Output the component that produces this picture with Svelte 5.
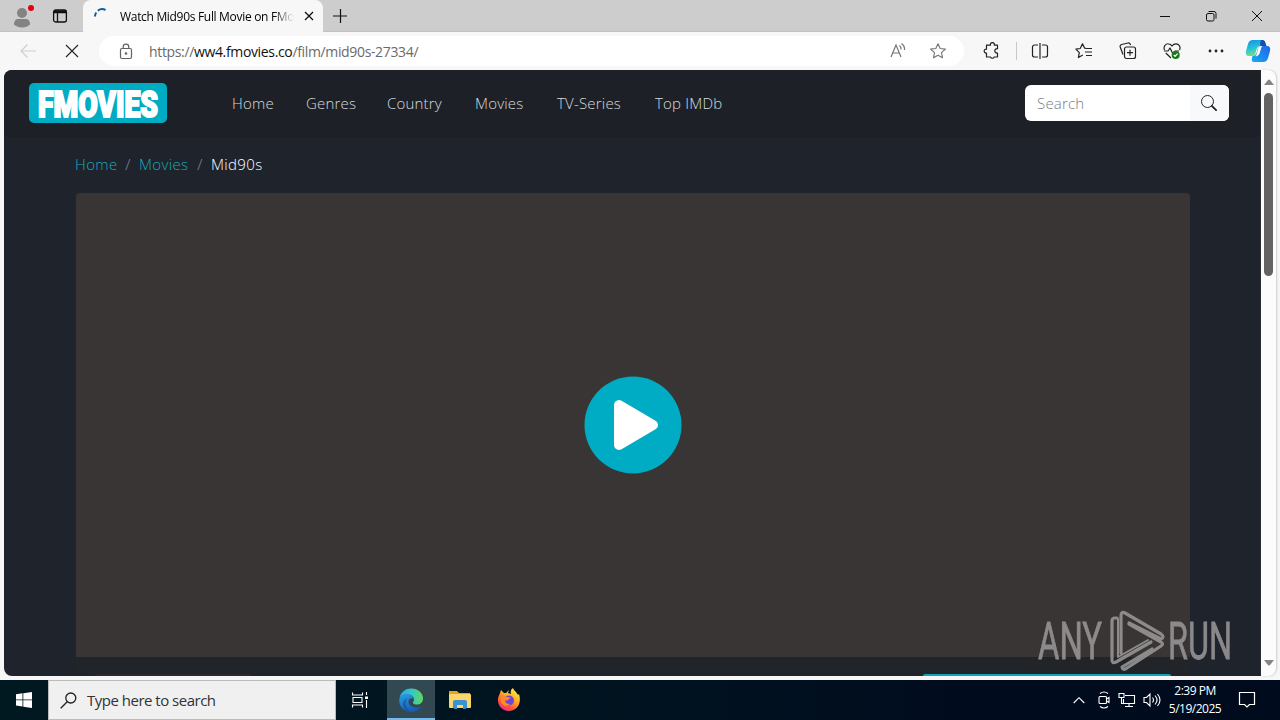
<!--
  Desktop — a browser window showing a film page, with the system taskbar below.
-->
<script lang="ts">
	const links = [
		{ label: 'Home', width: 42 },
		{ label: 'Genres', width: 49 },
		{ label: 'Country', width: 56 },
		{ label: 'Movies', width: 50 },
		{ label: 'TV-Series', width: 66 },
		{ label: 'Top IMDb', width: 67 }
	];

	let query = $state('');
</script>

<div class="desktop">
	<div class="tabs">
		<svg class="profile" width="24" height="28" viewBox="0 0 24 28">
			<circle cx="12" cy="11" r="5" fill="#858381" />
			<path d="M4 22.500c0-4 2-5.500 4-5.500h8c2 0 4 1.500 4 5.500-4 4-12 4-16 0z" fill="#858381" />
			<circle cx="21" cy="6" r="3" fill="#e3000f" />
		</svg>
		<svg class="tab-actions" width="16" height="16" viewBox="0 0 16 16" fill="none" stroke="#111" stroke-width="1.300">
			<rect x="1.600" y="2" width="12.800" height="12" rx="2" />
			<path d="M1.600 4.500h12.800M5.500 5v9" />
			<path d="M2 3.300h12" stroke-width="2" />
		</svg>
		<div class="tab">
			<svg class="spinner" width="16" height="16" viewBox="0 0 16 16" fill="none" stroke="#155a9b" stroke-width="2">
				<path d="M1 8.500a6.500 6.500 0 0 1 1.300-4M3.800 2.800A7 7 0 0 1 11.500 2" />
			</svg>
			<span class="tab-title">Watch Mid90s Full Movie on FMo</span>
			<svg width="10" height="10" viewBox="0 0 10 10" stroke="#111" stroke-width="1.300"><path d="m1 1 8 8M9 1 1 9" /></svg>
		</div>
		<svg class="new-tab" width="14" height="14" viewBox="0 0 14 14" stroke="#111" stroke-width="1.200"><path d="M0 7h14M7.500 0v14" /></svg>
		<div class="window-controls">
			<svg width="12" height="12" viewBox="0 0 12 12" stroke="#111" fill="none"><path d="M1 6.500h10" /></svg>
			<svg width="12" height="12" viewBox="0 0 12 12" stroke="#111" fill="none">
				<rect x="1.500" y="3.500" width="7.500" height="7.500" rx="1.500" />
				<path d="M3.500 1.500h5.500a2 2 0 0 1 2 2v5" />
			</svg>
			<svg width="12" height="12" viewBox="0 0 12 12" stroke="#111" fill="none"><path d="m1 1 10 10M11 1 1 11" /></svg>
		</div>
	</div>

	<div class="toolbar">
		<svg class="back" width="18" height="16" viewBox="0 0 18 16" fill="none" stroke="#cfcfcf" stroke-width="1.200"><path d="M17 8H2M8.500 1.500 2 8l6.500 6.500" /></svg>
		<svg class="stop" width="14" height="14" viewBox="0 0 14 14" stroke="#222" stroke-width="1.100"><path d="m1 1 12 12M13 1 1 13" /></svg>
		<div class="address">
			<svg width="14" height="17" viewBox="0 0 14 17" fill="none" stroke="#626262" stroke-width="1.200">
				<rect x="1.500" y="5.500" width="11" height="10" rx="1.500" />
				<path d="M4.200 5.500V4a2.800 2.800 0 0 1 5.600 0v1.500" />
				<circle cx="7" cy="10.500" r=".7" fill="#626262" />
			</svg>
			<span class="url">https://<b>ww4.fmovies.co</b>/film/mid90s-27334/</span>
			<svg class="read" width="18" height="18" viewBox="0 0 18 18" fill="none" stroke="#747474" stroke-width="1.200">
				<path d="M2 15 7 3l5 12M3.700 11h6.600M10.500 3.500q1.700 1.500 1.500 4M12.500 1.500q3.500 2.500 3 6.500" />
			</svg>
			<svg class="star" width="18" height="18" viewBox="0 0 18 18" fill="none" stroke="#747474" stroke-width="1.100" stroke-linejoin="round">
				<path d="m9 1.800 2.200 4.700 5.200.6-3.900 3.500 1 5.100L9 13.200l-4.500 2.500 1-5.100-3.900-3.500 5.200-.6z" />
			</svg>
		</div>
		<div class="tools">
			<svg width="18" height="18" viewBox="0 0 18 18">
				<path d="M3.500 3.200h4a2 2 0 1 1 3.800 0h3.200v3.500c-3.600-.5-3.600 4.800 0 4.300v4h-3.300a2 2 0 0 1-3.700 0H3.500v-4C.4 11.500.4 6.700 3.500 7.200z" />
			</svg>
			<svg width="18" height="18" viewBox="0 0 18 18">
				<path d="M7 3H3.500a2 2 0 0 0-2 2v8a2 2 0 0 0 2 2H7M11 3h3.500a2 2 0 0 1 2 2v8a2 2 0 0 1-2 2H11M9 1v16" />
			</svg>
			<svg width="18" height="18" viewBox="0 0 18 18">
				<path d="m11.500 6.500-1.800-.3-2.200-4.400-2.300 4.700-4.300.7 3.400 3.400-.9 5 4.400-2.500M11.500 6.500H17M10 10h7M11 13.500h6" />
			</svg>
			<svg width="18" height="18" viewBox="0 0 18 18">
				<path d="M4 12.500 1.200 5q-.5-2 1.500-2.500L9 1q2-.4 2.600 2" />
				<rect x="5.500" y="5" width="11" height="11.500" rx="2" />
				<path d="M11 7.700v6M8 10.700h6" />
			</svg>
			<svg width="18" height="18" viewBox="0 0 18 18">
				<path d="M1.500 8C0 4 3 1.500 5.500 1.800 7.700 2 9 4 9 4s1.500-2.200 4-2.200c3 0 5 3 3.500 6.200M2.800 11 8 16M1 9h4l2-3 3 6 2-3h4" />
				<circle cx="12.700" cy="13" r="4" fill="#16791b" stroke="none" />
				<path d="m10.800 13 1.300 1.300 2.500-2.700" stroke="#fff" />
			</svg>
			<svg width="18" height="18" viewBox="0 0 18 18" class="dots">
				<circle cx="3" cy="9" r="1.400" /><circle cx="9" cy="9" r="1.400" /><circle cx="15" cy="9" r="1.400" />
			</svg>
		</div>
		<svg class="copilot" width="26" height="24" viewBox="0 0 26 24">
			<defs>
				<linearGradient id="co-a" x1="0" y1="0" x2=".3" y2="1"><stop stop-color="#168bea" /><stop offset=".6" stop-color="#28c6d4" /><stop offset="1" stop-color="#7adf78" /></linearGradient>
				<linearGradient id="co-b" x1="1" y1="0" x2="0" y2="1"><stop stop-color="#2361e9" /><stop offset="1" stop-color="#13acf7" /></linearGradient>
			</defs>
			<path d="M8 1h9q3 0 2.300 3l-1 3h-3q-3 0-4 4l-1 4q-1 2-3 2H4q-4 0-3-5l2-7q1-4 5-4z" fill="url(#co-a)" />
			<path d="M18 7h4q4 0 3 5l-2 7q-1 4-5 4H9q-3 0-2-4l.5-2q3 0 4-3l1.500-5 3-3q0 0-1 3l-1.500 5q-.7 3-4 4 4-1 5-4l2-6q.5-1 1.500-1z" fill="url(#co-b)" />
			<path d="M15 1h2q3 0 3.500 3l1 3h-5.500q-2-1 0-6z" fill="#154faf" />
			<path d="M13.500 8.500q1-1.500 3-1.500l-2 7q-.8 3-4 3 1-1 1.500-3z" fill="#fff" />
		</svg>
	</div>

	<div class="window-body">
		<div class="page">
			<header class="site-header">
				<a class="logo" href="#home" aria-label="FMOVIES">
					<svg width="138" height="40" viewBox="0 0 138 40">
						<text x="9" y="33.500" textLength="120" lengthAdjust="spacingAndGlyphs">FMOVIES</text>
					</svg>
				</a>
				<nav>
					{#each links as link}
						<a href="#nav" style="width: {link.width}px">{link.label}</a>
					{/each}
				</nav>
				<form class="search">
					<input placeholder="Search" bind:value={query} />
					<button type="button" aria-label="Search">
						<svg width="16" height="16" viewBox="0 0 16 16" fill="none" stroke="#212529">
							<circle cx="6.500" cy="6.500" r="6" />
							<path d="m10.800 10.800 4.300 4.300" stroke-width="1.900" stroke-linecap="round" />
						</svg>
					</button>
				</form>
			</header>

			<div class="breadcrumb">
				<a href="#home" class="crumb-home">Home</a>
				<i>/</i>
				<a href="#movies" class="crumb-movies">Movies</a>
				<i>/</i>
				<span>Mid90s</span>
			</div>

			<div class="player">
				<svg width="98" height="98" viewBox="0 0 98 98">
					<circle cx="49" cy="49" r="48.500" fill="#00acc4" />
					<path d="M35 29v40l34-20z" fill="#fff" stroke="#fff" stroke-width="10" stroke-linejoin="round" />
				</svg>
			</div>
			<div class="player-actions">
				<span class="report"></span>
				<span class="watch"></span>
			</div>
		</div>
		<div class="scrollbar">
			<svg width="10" height="6" viewBox="0 0 10 6"><path d="M0 6 4 1q1-1 2 0l4 5z" fill="#858585" /></svg>
			<div class="thumb"></div>
			<svg class="down" width="10" height="6" viewBox="0 0 10 6"><path d="M0 0h10L6 5Q5 6 4 5z" fill="#858585" /></svg>
		</div>
	</div>

	<div class="taskbar">
		<div class="start">
			<svg width="16" height="16" viewBox="0 0 16 16" fill="#fff"><path d="M0 2.200 6.500 1.300v6.200H0zM7.300 1.200 16 0v7.500H7.300zM0 8.300h6.500v6.200L0 13.600zM7.300 8.300H16V16l-8.700-1.300z" /></svg>
		</div>
		<div class="task-search">
			<svg width="17" height="17" viewBox="0 0 17 17" fill="none" stroke="#222" stroke-width="1.300"><circle cx="10.800" cy="6" r="5" /><path d="M7.200 9.700.7 16.200" /></svg>
			<span>Type here to search</span>
		</div>
		<div class="task task-view">
			<svg width="18" height="18" viewBox="0 0 18 18" fill="none" stroke="#fff" stroke-width="1.100">
				<path d="M1.500 1.500v2.500h10V1.500M1.500 16.500V14h10v2.500M2 6.500h9v5H2zM15.500 1v3M15.500 9v8" />
				<path d="M14 5.500h3v2.500h-3z" fill="#fff" stroke="none" />
			</svg>
		</div>
		<div class="task active">
			<svg width="24" height="24" viewBox="0 0 24 24">
				<defs>
					<linearGradient id="edge-top"><stop stop-color="#2aa8df" /><stop offset=".5" stop-color="#33c6cb" /><stop offset="1" stop-color="#62d957" /></linearGradient>
					<linearGradient id="edge-low" x1="0" y1="0" x2=".5" y2="1"><stop stop-color="#2a9fe5" /><stop offset="1" stop-color="#155db2" /></linearGradient>
				</defs>
				<path d="M.5 10C2 3.500 7 .3 12.500.5 19 .5 24 5 24 10.500c0 4-3 6-6 6-3.500 0-5-1.500-3.500-3C16 11 14.500 8 11 7 7 5.500 2.500 7 .5 10z" fill="url(#edge-top)" />
				<path d="M.3 12C.5 8 4 5.700 8 6c4 0 7 2.500 7 5-1.500-1.500-5-1-5.500 2-.5 4 4 7 8 6.500 2 0 3.500-.7 4.500-1-2.500 3.700-6 5.500-10 5.500C5.500 24-.2 18.500.3 12z" fill="url(#edge-low)" />
				<path d="M8.500 10C4 15 7.500 22.500 13 23.900 8 24.500 4 20 4 16c0-3 2-5 4.500-6z" fill="#1749a0" opacity=".65" />
			</svg>
		</div>
		<div class="task">
			<svg width="22" height="20" viewBox="0 0 22 20">
				<path d="M0 1h8l2 2h11v4H0z" fill="#e8a21c" />
				<path d="M0 4h21q1 0 1 1v12q0 1-1 1H1q-1 0-1-1z" fill="#fbd66a" />
				<path d="M4 18v-6q0-2 2-2h10q2 0 2 2v6l-2 1h-2v-4H8v4H6z" fill="#3a93d1" />
			</svg>
		</div>
		<div class="task">
			<svg width="24" height="24" viewBox="0 0 24 24">
				<defs>
					<linearGradient id="fox" x1=".8" y1="0" x2=".2" y2="1"><stop stop-color="#fff34c" /><stop offset=".4" stop-color="#ffac28" /><stop offset=".7" stop-color="#ff5b36" /><stop offset="1" stop-color="#e9248b" /></linearGradient>
				</defs>
				<path d="M3 5 4 2l3 3h2l3-3-1 3 3 1c-1-3 .5-5 2-6 1 3 3 3 5 7l1-1c3 9-2 17-10 17C4 23 0 16 1 10l2-5z" fill="url(#fox)" />
				<circle cx="12" cy="12.500" r="5" fill="#7045d1" />
				<path d="M4 9q3-2 6 0l4 .5-3 2.500q-2 1-3 0 0 4 5 4-4 4-8 0-2-3-1-7z" fill="#ff8b24" />
			</svg>
		</div>
		<div class="tray">
			<svg class="chevron" width="12" height="8" viewBox="0 0 12 8"><path d="m.7 7 5.300-5.300L11.300 7" /></svg>
			<svg width="14" height="18" viewBox="0 0 14 18"><rect x="2" y="5.500" width="7.500" height="7" rx="1" /><path d="m9.500 8 2.500-1.500v5L9.500 10M3 2.500Q7-.5 11 2.500M3 15.500q4 3 8 0" /></svg>
			<svg width="18" height="16" viewBox="0 0 18 16"><path d="M7 3.500h9.500v8H5.500V7M11 11.500v3M7 14.500h8M1 1.500h5v4H1zM3.500 5.500v6h2" /></svg>
			<svg width="18" height="16" viewBox="0 0 18 16"><path d="M1 5.500h2.500L7 2v12L3.500 10.500H1zM9.500 5.500q2 2.500 0 5M12 3.500q4 4.500 0 9M14.500 2q5 6 0 12" /></svg>
		</div>
		<div class="clock">
			<span class="time">2:39 PM</span>
			<span class="date">5/19/2025</span>
		</div>
		<svg class="notify" width="18" height="18" viewBox="0 0 18 18" fill="none" stroke="#fff" stroke-width="1.200"><path d="M1.500 1.500h15v12h-5L9 16l-2.500-2.500h-5z" /></svg>
	</div>

	<svg class="watermark" width="200" height="62" viewBox="0 0 200 62">
		<g class="letters">
			<text transform="translate(0 49) scale(1 1.280)" textLength="64" lengthAdjust="spacingAndGlyphs">ANY</text>
			<text transform="translate(130 49) scale(1 1.280)" textLength="64" lengthAdjust="spacingAndGlyphs">RUN</text>
		</g>
		<g fill="none" stroke="#969495" stroke-width="3.200" stroke-linejoin="round" stroke-linecap="round">
			<path d="M79 8h-2q-3 0-3 3v39q0 4 4 2l35-20" />
			<path d="M83 43V6q0-5 4-3l36 21q4 3 0 5L91 13" />
			<path d="m91 14 32 18q3 2 0 4L89 58q-4 3-5-1l30-18" />
			<path d="M80 9v38l30-17" stroke-width="2" />
		</g>
	</svg>
</div>

<style>
	:global(body) {
		margin: 0;
		overflow: hidden;
	}
	.desktop {
		position: relative;
		display: grid;
		grid-template-rows: 32px 38px 610px 40px;
		width: 1280px;
		height: 720px;
		background: #f7f7f7;
		font-family: 'Open Sans', 'Noto Sans', sans-serif;
		overflow: hidden;
	}
	svg {
		display: block;
		flex: none;
	}
	a {
		color: inherit;
		text-decoration: none;
	}

	.tabs {
		display: flex;
		align-items: center;
		box-sizing: border-box;
		background: #cdcdcd;
		border-bottom: 1px solid #c2c2c2;
	}
	.profile {
		margin-left: 10px;
	}
	.tab-actions {
		margin: 0 15px 0 18px;
	}
	.tab {
		display: flex;
		align-items: center;
		align-self: stretch;
		box-sizing: border-box;
		width: 240px;
		margin-bottom: -1px;
		padding: 0 11px;
		background: #f7f7f7;
		border-radius: 8px 8px 0 0;
	}
	.tab-title {
		width: 174px;
		margin: 0 10px;
		font-size: 12px;
		letter-spacing: -0.31px;
		white-space: nowrap;
		mask-image: linear-gradient(90deg, #000 88%, transparent);
	}
	.new-tab {
		margin-left: 10px;
	}
	.window-controls {
		display: flex;
		gap: 34px;
		margin-left: auto;
		margin-right: 17px;
	}

	.toolbar {
		display: flex;
		align-items: center;
	}
	.back {
		margin-left: 19px;
	}
	.stop {
		margin: 0 21px 0 28px;
	}
	.address {
		display: flex;
		align-items: center;
		box-sizing: border-box;
		width: 865px;
		height: 30px;
		margin-left: -1px;
		padding: 0 17px 0 20px;
		background: #fff;
		border-radius: 15px;
	}
	.url {
		margin-left: 16px;
		color: #6a6a6a;
		font-size: 14px;
		letter-spacing: -0.35px;
	}
	.url b {
		color: #111;
		font-weight: 400;
	}
	.read {
		margin-left: auto;
	}
	.star {
		margin-left: 22px;
	}
	.tools {
		display: grid;
		grid-template-columns: 48px repeat(4, 44px) 18px;
		margin-left: 19px;
		fill: none;
		stroke: #222;
		stroke-width: 1.200;
		stroke-linejoin: round;
	}
	.tools svg:first-child {
		box-sizing: border-box;
		width: 34px;
		border-right: 1px solid #c8c8c8;
		padding-right: 15px;
	}
	.tools .dots {
		fill: #222;
		stroke: none;
	}
	.copilot {
		margin-left: 20px;
	}

	.window-body {
		display: flex;
		box-sizing: border-box;
		padding: 0 4px 4px;
	}
	.page {
		display: flex;
		flex-direction: column;
		width: 1257px;
		height: 606px;
		overflow: hidden;
		background: #1f232b;
		border-radius: 8px 0 0 8px;
		font-size: 16px;
		font-weight: 300;
	}
	.site-header {
		display: flex;
		flex: none;
		align-items: center;
		box-sizing: border-box;
		height: 67px;
		padding: 0 32px 1px 25px;
		background: #1d2127;
	}
	.logo {
		width: 138px;
		height: 40px;
		background: #00acc4;
		border-radius: 5px;
	}
	.logo svg {
		overflow: visible;
	}
	.logo text {
		fill: #fff;
		stroke: #fff;
		stroke-width: 2;
		font: 900 36px Roboto, sans-serif;
	}
	nav {
		display: flex;
		gap: 32px;
		margin-left: 65px;
		color: #d8dade;
		font-size: 15px;
		letter-spacing: 0.2px;
		white-space: nowrap;
	}
	.search {
		display: flex;
		width: 204px;
		height: 36px;
		margin-left: auto;
		overflow: hidden;
		background: #fff;
		border-radius: 6px;
	}
	.search input {
		flex: 1;
		min-width: 0;
		padding: 0 12px;
		border: 0;
		background: none;
		font: 300 15px 'Open Sans', sans-serif;
		letter-spacing: 0.2px;
	}
	.search input::placeholder {
		color: #777b82;
	}
	.search button {
		display: grid;
		place-items: center;
		width: 39px;
		padding: 0 2px 0 0;
		border: 0;
		background: #f8f9fa;
	}

	.breadcrumb {
		display: flex;
		align-items: center;
		height: 24px;
		margin: 15px 0 17px 71px;
		color: #fff;
		font-size: 15px;
		letter-spacing: 0.35px;
	}
	.breadcrumb a {
		color: #18aabd;
	}
	.breadcrumb i {
		width: 22px;
		color: #8b929b;
		font-style: normal;
		text-align: center;
	}
	.crumb-home {
		width: 42px;
	}
	.crumb-movies {
		width: 50px;
	}
	.player {
		display: grid;
		flex: none;
		place-items: center;
		width: 1114px;
		height: 464px;
		margin-left: 72px;
		background: #393534;
		border-radius: 4px 4px 0 0;
	}
	.player-actions {
		display: flex;
		justify-content: space-between;
		align-items: flex-end;
		box-sizing: border-box;
		width: 1114px;
		height: 19px;
		margin-left: 72px;
		padding: 0 19px;
		background: #212429;
	}
	.report {
		width: 156px;
		height: 2px;
		background: #2b2b2d;
		border-radius: 4px 4px 0 0;
	}
	.watch {
		width: 248px;
		height: 2px;
		background: #12a5b8;
		border-radius: 4px 4px 0 0;
	}

	.scrollbar {
		display: flex;
		flex-direction: column;
		align-items: center;
		box-sizing: border-box;
		width: 15px;
		height: 606px;
		padding: 9px 0 10px;
		background: #fcfcfc;
		border-radius: 0 8px 8px 0;
		box-shadow: 1px 0 2px #ccc;
	}
	.thumb {
		width: 9px;
		height: 183px;
		margin-top: 8px;
		background: #636363;
		border-radius: 5px;
	}
	.down {
		margin-top: auto;
	}

	.taskbar {
		display: flex;
		align-items: center;
		background: linear-gradient(90deg, #001820, #001420 45%, #000c1e 75%);
		color: #fff;
	}
	.start,
	.task {
		display: grid;
		place-items: center;
		width: 48px;
		height: 40px;
	}
	.task {
		width: 49px;
	}
	.task.active {
		box-sizing: border-box;
		width: 48px;
		background: #334951;
		border-bottom: 2px solid #76b9ed;
		padding-top: 2px;
	}
	.task-search {
		display: flex;
		align-items: center;
		box-sizing: border-box;
		width: 288px;
		height: 40px;
		padding-left: 11px;
		background: #f0f0f0;
		border: 1px solid #bbb;
		color: #333;
		font-size: 15px;
		letter-spacing: -0.5px;
	}
	.task-search span {
		margin-left: 10px;
	}
	.task-view {
		width: 48px;
		margin-right: 3px;
	}
	.tray {
		display: flex;
		align-items: center;
		gap: 7px;
		margin-left: auto;
		fill: none;
		stroke: #fff;
		stroke-width: 1.100;
	}
	.chevron {
		margin-right: 5px;
	}
	.clock {
		display: grid;
		width: 56px;
		margin-left: 6px;
		font-size: 12px;
		line-height: 18px;
		letter-spacing: -0.5px;
		text-align: center;
		white-space: nowrap;
	}
	.notify {
		margin: 0 24px 0 15px;
	}

	/* floats over both the player and the page edge */
	.watermark {
		position: absolute;
		left: 1038px;
		top: 610px;
		overflow: visible;
		opacity: 0.9;
	}
	.letters {
		fill: #969495;
		stroke: #969495;
		stroke-width: 0.6;
		font: 400 40px Roboto, sans-serif;
	}
</style>
